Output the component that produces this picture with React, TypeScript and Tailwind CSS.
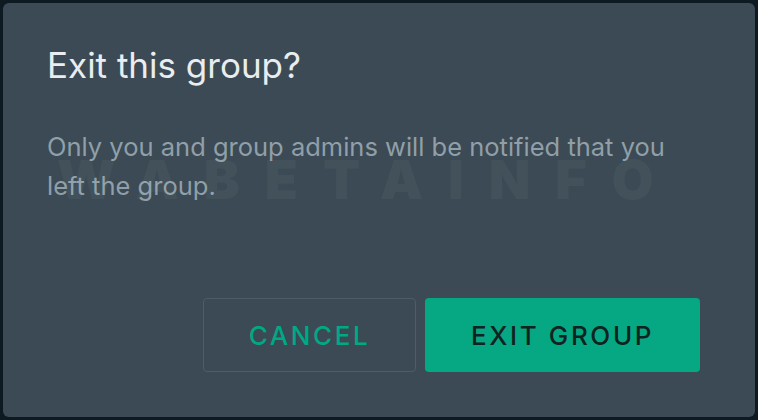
export default function App() {
  return (
    <div className="h-[420px] w-[758px] bg-[#0d1a21] p-[3px] font-['Inter',sans-serif]">
      <div className="relative flex h-full flex-col rounded-[6px] bg-[#3b4a54] pl-[44px] pr-[55px] pb-[45px]">
        {/* watermark */}
        <div className="pointer-events-none absolute left-[54px] top-[150px] select-none text-[54px] font-black leading-none tracking-[25px] text-white/[0.045]">
          WABETAINFO
        </div>

        <h1 className="mt-[40px] text-[35px] font-normal leading-[44px] text-[#e9edef]">Exit this group?</h1>
        <p className="mt-[40px] text-[25.5px] leading-[39px] text-[#909fa8]">
          Only you and group admins will be notified that you left the group.
        </p>

        <div className="mt-auto flex justify-end gap-[9px]">
          <button className="h-[74px] w-[213px] rounded-[4px] border border-[#4d5c66] text-[26px] font-medium tracking-[0.1em] text-[#00a884]">
            CANCEL
          </button>
          <button className="h-[74px] w-[275px] rounded-[4px] bg-[#06a884] text-[26px] font-medium tracking-[0.1em] text-[#0f2420]">
            EXIT GROUP
          </button>
        </div>
      </div>
    </div>
  )
}
